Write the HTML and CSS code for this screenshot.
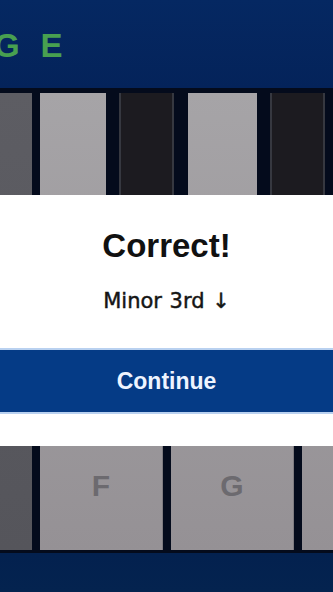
FILE: index.html
```html
<!DOCTYPE html>
<html lang="en">
<head>
<meta charset="utf-8">
<title>Interval Challenge</title>
<link rel="stylesheet" href="styles.css">
</head>
<body>
<div class="app">
  <header class="topbar">
    <h2 class="title">G E</h2>
  </header>
  <div class="piano">
    <div class="key dim"></div>
    <div class="key"><span class="note">F</span></div>
    <div class="key"><span class="note">G</span></div>
    <div class="key"></div>
    <div class="black fs"><div class="black-inner"></div></div>
    <div class="black gs"><div class="black-inner"></div></div>
  </div>
  <footer class="bottombar"></footer>
  <div class="modal">
    <h1 class="modal-title">Correct!</h1>
    <p class="modal-sub">Minor 3rd ↓</p>
    <button class="continue">Continue</button>
  </div>
</div>
</body>
</html>
```

FILE: styles.css
```css
html, body {
  margin: 0;
  padding: 0;
  background: #03214f;
}
.app {
  position: relative;
  width: 333px;
  height: 592px;
  overflow: hidden;
  display: flex;
  flex-direction: column;
}
.topbar {
  height: 88px;
  box-sizing: border-box;
  padding-top: 27px;
  background: linear-gradient(180deg, #052862, #04235a);
}
.title {
  margin: 0;
  text-indent: -6px;
  font-family: "Liberation Sans", Arial, sans-serif;
  font-weight: bold;
  font-size: 33px;
  letter-spacing: 5.8px;
  color: #48a050;
  white-space: nowrap;
}
.piano {
  position: relative;
  height: 465px;
  box-sizing: border-box;
  padding: 5px 0 3px;
  background: #040b1c;
  display: flex;
  gap: 8px;
  overflow: hidden;
}
.key {
  flex: 0 0 123px;
  box-sizing: border-box;
  background: linear-gradient(180deg, #a6a4a7, #959195);
  border-right: 1px solid #7e7b80;
  display: flex;
  flex-direction: column;
  align-items: center;
  justify-content: flex-end;
  padding-bottom: 47px;
}
.key.dim {
  flex: 0 0 32px;
  background: linear-gradient(180deg, #5d5d63, #55555b);
  border-right: none;
}
.key:last-of-type {
  flex: 1 1 auto;
}
.note {
  font-family: "Liberation Sans", Arial, sans-serif;
  font-weight: bold;
  font-size: 30px;
  color: #6c6a6f;
}
.black {
  position: absolute;
  top: 0;
  width: 82px;
  height: 160px;
  box-sizing: border-box;
  padding: 5px 14px 0 13px;
  background: #040b1c;
}
.black.fs { left: 106px; }
.black.gs { left: 257px; }
.black-inner {
  height: 100%;
  box-sizing: border-box;
  background: #1c1b20;
  border-left: 2px solid #363840;
  border-right: 2px solid #363840;
}
.bottombar {
  flex: 1 1 auto;
  background: linear-gradient(180deg, #03214f, #04234f);
}
.modal {
  position: absolute;
  top: 195px;
  left: 0;
  right: 0;
  height: 251px;
  box-sizing: border-box;
  background: #ffffff;
  padding-top: 32px;
  display: flex;
  flex-direction: column;
  align-items: stretch;
  text-align: center;
}
.modal-title {
  margin: 0;
  height: 38px;
  font-family: "Liberation Sans", Arial, sans-serif;
  font-weight: bold;
  font-size: 33px;
  line-height: 38px;
  color: #111111;
}
.modal-sub {
  margin: 24px 0 0;
  height: 24px;
  font-family: "DejaVu Sans", Verdana, sans-serif;
  font-size: 21px;
  line-height: 24px;
  color: #151515;
  -webkit-text-stroke: 0.45px #151515;
  word-spacing: 1px;
}
.continue {
  margin-top: 35px;
  height: 66px;
  border: none;
  border-top: 2px solid #b9d1f0;
  border-bottom: 2px solid #b9d1f0;
  background: #053b86;
  color: #eef4ff;
  font-family: "Liberation Sans", Arial, sans-serif;
  font-weight: bold;
  font-size: 23px;
  padding: 0;
}
```
